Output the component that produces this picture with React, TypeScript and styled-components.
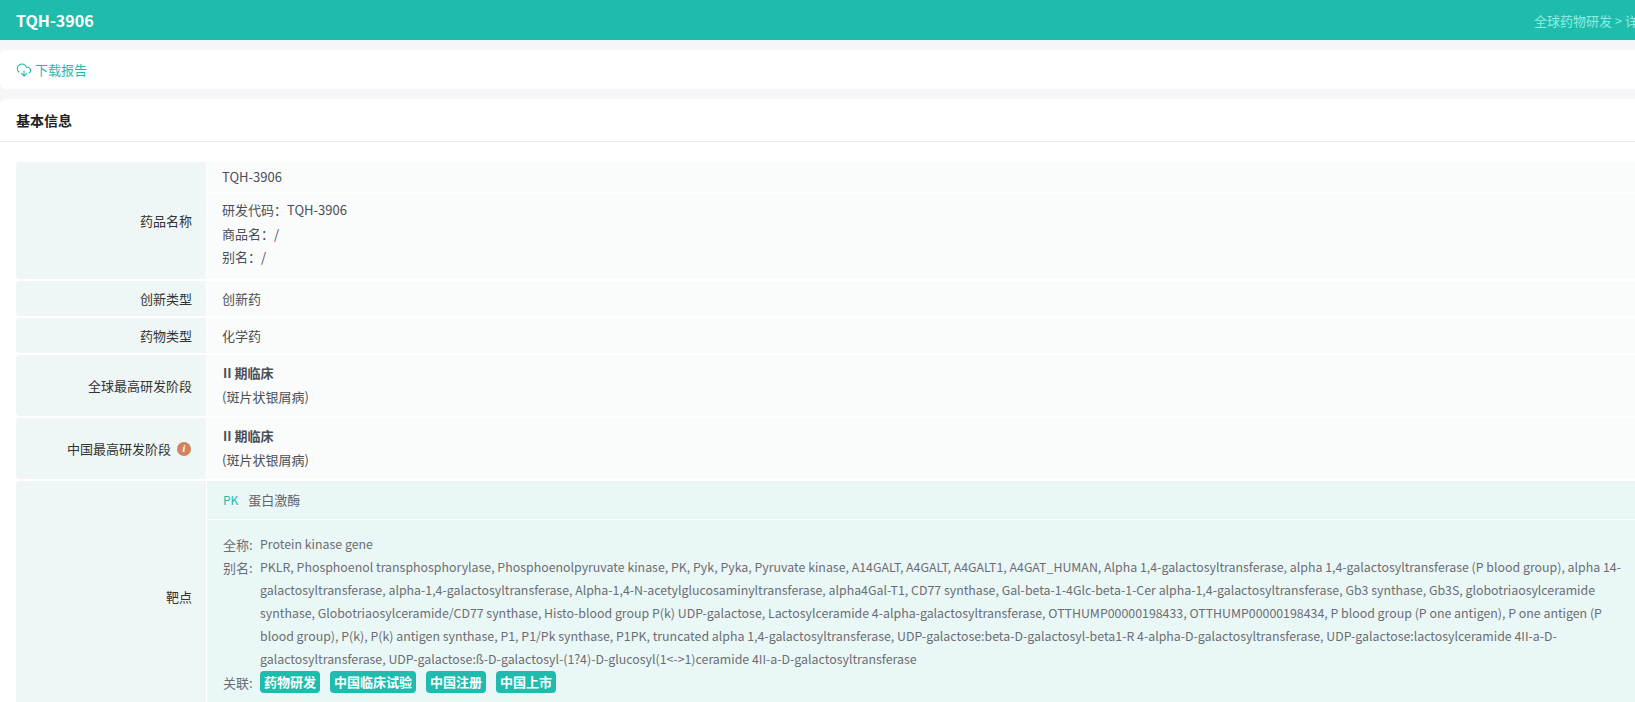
import React from 'react'
import styled, { createGlobalStyle } from 'styled-components'
import { CloudDownload } from 'lucide-react'

const GlobalStyle = createGlobalStyle`
  html, body {
    margin: 0;
    padding: 0;
    background: #f6f6f8;
    overflow-x: hidden;
    font-family: "Noto Sans CJK SC", "Noto Sans", sans-serif;
  }
`

const aliasLines = [
  'PKLR, Phosphoenol transphosphorylase, Phosphoenolpyruvate kinase, PK, Pyk, Pyka, Pyruvate kinase, A14GALT, A4GALT, A4GALT1, A4GAT_HUMAN, Alpha 1,4-galactosyltransferase, alpha 1,4-galactosyltransferase (P blood group), alpha 14-',
  'galactosyltransferase, alpha-1,4-galactosyltransferase, Alpha-1,4-N-acetylglucosaminyltransferase, alpha4Gal-T1, CD77 synthase, Gal-beta-1-4Glc-beta-1-Cer alpha-1,4-galactosyltransferase, Gb3 synthase, Gb3S, globotriaosylceramide',
  'synthase, Globotriaosylceramide/CD77 synthase, Histo-blood group P(k) UDP-galactose, Lactosylceramide 4-alpha-galactosyltransferase, OTTHUMP00000198433, OTTHUMP00000198434, P blood group (P one antigen), P one antigen (P',
  'blood group), P(k), P(k) antigen synthase, P1, P1/Pk synthase, P1PK, truncated alpha 1,4-galactosyltransferase, UDP-galactose:beta-D-galactosyl-beta1-R 4-alpha-D-galactosyltransferase, UDP-galactose:lactosylceramide 4II-a-D-',
  'galactosyltransferase, UDP-galactose:ß-D-galactosyl-(1?4)-D-glucosyl(1<->1)ceramide 4II-a-D-galactosyltransferase',
]

const tags = ['药物研发', '中国临床试验', '中国注册', '中国上市']

const Page = styled.div`
  width: 1667px;
  height: 702px;
  overflow: hidden;
`

const TopBar = styled.header`
  height: 40px;
  background: #1fbcae;
  display: flex;
  align-items: center;
  justify-content: space-between;
  padding: 0 16px;
`

const Title = styled.h1`
  margin: 0;
  font-size: 16px;
  font-weight: 700;
  color: #fff;
`

const Crumb = styled.div`
  font-size: 13px;
  color: #8eeee2;
`

const Card = styled.section`
  background: #fff;
  border-radius: 6px;
  margin-top: 10px;
`

const ActionBar = styled(Card)`
  height: 39px;
  display: flex;
  align-items: center;
  padding: 0 16px;
`

const DownloadLink = styled.a`
  display: flex;
  align-items: center;
  gap: 3px;
  font-size: 13px;
  color: #1fbcae;
`

const CardHead = styled.div`
  height: 42px;
  display: flex;
  align-items: center;
  padding: 0 16px;
  border-bottom: 1px solid #e9eaec;
  font-size: 14px;
  font-weight: 700;
  color: #222;
`

const Table = styled.div`
  display: flex;
  flex-direction: column;
  gap: 2px;
  padding: 20px 0 0 16px;
`

const Row = styled.div`
  display: grid;
  grid-template-columns: 190px 1fr;
  column-gap: 1px;
`

const Label = styled.div`
  background: #eef6f6;
  border-radius: 4px 0 0 4px;
  display: flex;
  align-items: center;
  justify-content: flex-end;
  gap: 6px;
  padding-right: 14px;
  font-size: 13px;
  color: #333;
`

const Stack = styled.div`
  display: flex;
  flex-direction: column;
  gap: 2px;
`

const Value = styled.div<{ $h?: number; $up?: number }>`
  background: #fafcfc;
  min-height: ${p => p.$h ?? 35}px;
  box-sizing: border-box;
  padding: 0 15px ${p => p.$up ?? 0}px;
  display: flex;
  flex-direction: column;
  justify-content: center;
  font-size: 13px;
  line-height: 23.5px;
  color: #4a4f55;
`

const Strong = styled.div`
  font-weight: 700;
  padding-left: 1px;
`

const Info = styled.span`
  width: 14px;
  height: 14px;
  margin-right: 1px;
  border-radius: 50%;
  background: #cf8460;
  color: #fff;
  font: italic 700 10px/14px "Liberation Serif", serif;
  text-align: center;
`

const TargetCell = styled.div`
  background: #eaf7f7;
  min-height: 230px;
`

const TargetHead = styled.div`
  height: 39px;
  box-sizing: border-box;
  display: flex;
  align-items: center;
  gap: 10px;
  padding: 0 16px 1px;
  border-bottom: 1px solid #fff;
  font-size: 13px;
  color: #666;
`

const Symbol = styled.span`
  color: #1fbcae;
  font-size: 12px;
`

const TargetBody = styled.div`
  padding: 13px 16px 0;
  font-size: 13px;
  line-height: 23px;
  color: #6a6e72;
`

const Field = styled.div`
  display: grid;
  grid-template-columns: 37px 1fr;
`

const Line = styled.div`
  white-space: nowrap;
  font-size: 12.36px;
`

const Tags = styled.div`
  display: flex;
  align-items: center;
  gap: 10px;
  height: 21px;
`

const Tag = styled.span`
  background: #1fbcae;
  color: #fff;
  border-radius: 4px;
  font-size: 13px;
  font-weight: 700;
  line-height: 22px;
  padding: 0 4px;
`

export default function App() {
  return (
    <Page>
      <GlobalStyle />
      <TopBar>
        <Title>TQH-3906</Title>
        <Crumb>全球药物研发 &gt; 详情</Crumb>
      </TopBar>
      <ActionBar>
        <DownloadLink>
          <CloudDownload size={16} strokeWidth={1.6} />
          下载报告
        </DownloadLink>
      </ActionBar>
      <Card>
        <CardHead>基本信息</CardHead>
        <Table>
          <Row>
            <Label>药品名称</Label>
            <Stack>
              <Value $h={30}>TQH-3906</Value>
              <Value $h={85} $up={6}>
                <div>研发代码：TQH-3906</div>
                <div>商品名：/</div>
                <div>别名：/</div>
              </Value>
            </Stack>
          </Row>
          <Row>
            <Label>创新类型</Label>
            <Value>创新药</Value>
          </Row>
          <Row>
            <Label>药物类型</Label>
            <Value>化学药</Value>
          </Row>
          <Row>
            <Label>全球最高研发阶段</Label>
            <Value $h={61} $up={2}>
              <Strong>II 期临床</Strong>
              <div>(斑片状银屑病)</div>
            </Value>
          </Row>
          <Row>
            <Label>
              中国最高研发阶段
              <Info>i</Info>
            </Label>
            <Value $h={61} $up={2}>
              <Strong>II 期临床</Strong>
              <div>(斑片状银屑病)</div>
            </Value>
          </Row>
          <Row>
            <Label>靶点</Label>
            <TargetCell>
              <TargetHead>
                <Symbol>PK</Symbol>
                蛋白激酶
              </TargetHead>
              <TargetBody>
                <Field>
                  <span>全称:</span>
                  <Line>Protein kinase gene</Line>
                </Field>
                <Field>
                  <span>别名:</span>
                  <div>
                    {aliasLines.map(line => (
                      <Line key={line}>{line}</Line>
                    ))}
                  </div>
                </Field>
                <Field>
                  <span>关联:</span>
                  <Tags>
                    {tags.map(tag => (
                      <Tag key={tag}>{tag}</Tag>
                    ))}
                  </Tags>
                </Field>
              </TargetBody>
            </TargetCell>
          </Row>
        </Table>
      </Card>
    </Page>
  )
}
